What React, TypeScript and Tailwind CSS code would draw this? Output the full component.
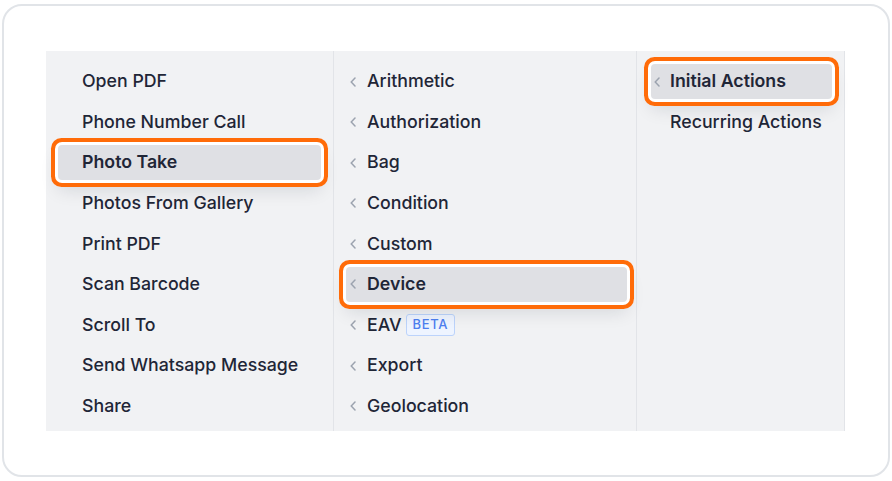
import React from "react";

const col1 = [
  "Open PDF",
  "Phone Number Call",
  "Photo Take",
  "Photos From Gallery",
  "Print PDF",
  "Scan Barcode",
  "Scroll To",
  "Send Whatsapp Message",
  "Share",
];
const col2 = [
  "Arithmetic",
  "Authorization",
  "Bag",
  "Condition",
  "Custom",
  "Device",
  "EAV",
  "Export",
  "Geolocation",
];
const col3 = ["Initial Actions", "Recurring Actions"];

const hl =
  "relative z-10 bg-[#dfe0e4] font-semibold shadow-[0_0_0_3px_#ffffff,0_0_0_7px_#ff6b08,0_10px_18px_rgba(15,23,42,0.12)]";

function Chevron() {
  return (
    <svg width="6" height="10" viewBox="0 0 6 10" className="shrink-0">
      <path d="M5 1 L1.2 5 L5 9" fill="none" stroke="#9ca3af" strokeWidth="1.5" strokeLinecap="round" strokeLinejoin="round" />
    </svg>
  );
}

export default function App() {
  return (
    <div className="w-[892px] h-[481px] bg-white pt-[4px] pl-[2px]" style={{ fontFamily: "Inter, 'Noto Sans', sans-serif" }}>
      <div className="w-[888px] h-[473px] rounded-[20px] border-2 border-[#e1e4e8] pt-[45px] pl-[42px]">
        <div className="flex w-[799px] h-[380px] bg-[#f1f2f4]">
          <div className="w-[288px] border-r border-[#e2e4e8] flex flex-col gap-[5.6px] pt-[13px]">
            {col1.map((t) => (
              <div
                key={t}
                className={`mx-3 h-[35px] rounded-[4px] pl-[24px] flex items-center text-[17.75px] text-[#1f2637] ${t === "Photo Take" ? hl : "font-medium"}`}
              >
                {t}
              </div>
            ))}
          </div>
          <div className="w-[303px] border-r border-[#e2e4e8] flex flex-col gap-[5.6px] pt-[13px]">
            {col2.map((t) => (
              <div
                key={t}
                className={`ml-3 mr-[9px] h-[35px] rounded-[4px] pl-[4px] flex items-center text-[17.75px] text-[#1f2637] ${t === "Device" ? hl : "font-medium"}`}
              >
                <Chevron />
                <span className="ml-[11px]">{t}</span>
                {t === "EAV" && (
                  <span className="ml-[4px] h-[22px] px-[6px] flex items-center rounded-[3px] border border-[#bcd3fb] bg-[#eef4ff] text-[#4d7ff0] text-[13px] font-medium tracking-[0.6px]">
                    BETA
                  </span>
                )}
              </div>
            ))}
          </div>
          <div className="w-[208px] border-r border-[#e2e4e8] flex flex-col gap-[5.6px] pt-[13px]">
            {col3.map((t) => (
              <div
                key={t}
                className={`ml-[14px] mr-3 h-[35px] rounded-[4px] pl-[3px] flex items-center text-[17.75px] text-[#1f2637] ${t === "Initial Actions" ? hl : "font-medium"}`}
              >
                {t === "Initial Actions" ? <Chevron /> : <span className="w-[6px] shrink-0" />}
                <span className="ml-[10px]">{t}</span>
              </div>
            ))}
          </div>
        </div>
      </div>
    </div>
  );
}
